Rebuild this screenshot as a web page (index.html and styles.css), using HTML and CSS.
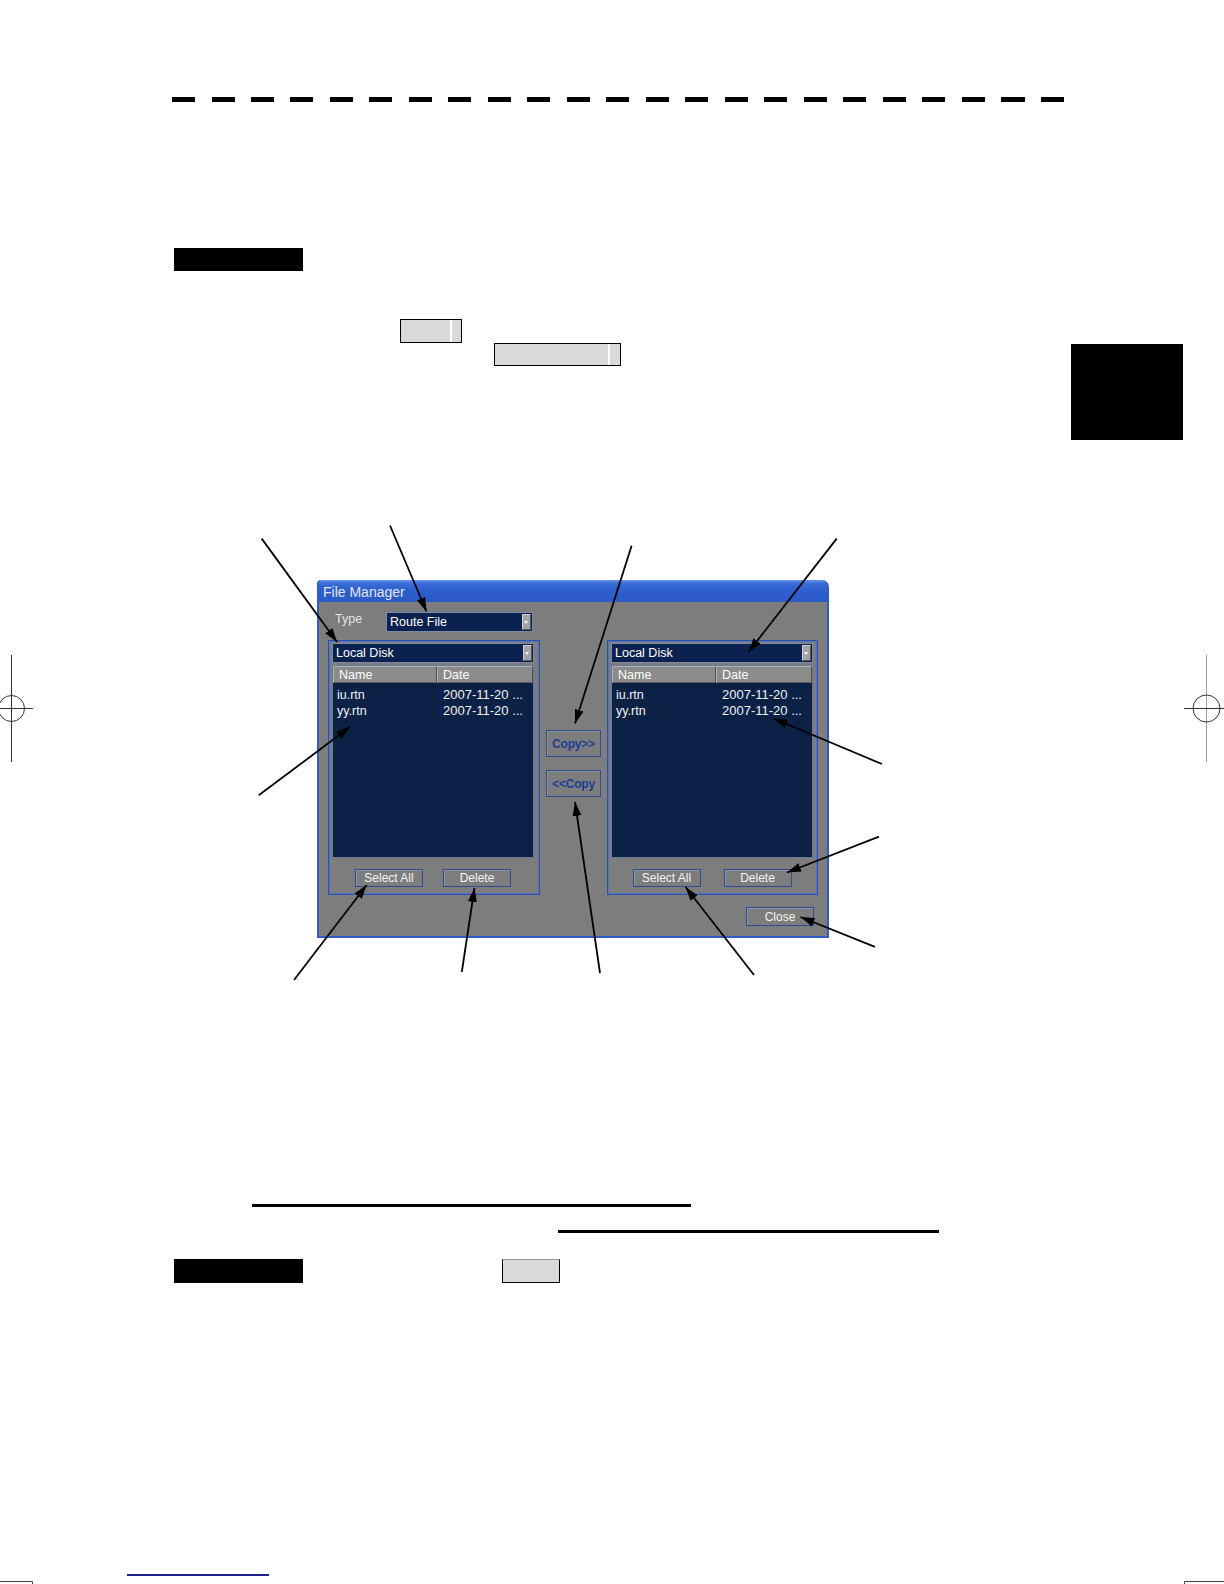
FILE: index.html
```html
<!DOCTYPE html>
<html lang="en">
<head>
<meta charset="utf-8">
<title>File Manager</title>
<link rel="stylesheet" href="styles.css">
</head>
<body>
<div class="page">
  <div class="rule"></div>

  <div class="sec1">
    <div class="sec1-left">
      <div class="blk-label"></div>
      <div class="key key-a"></div>
      <div class="key key-b"></div>
    </div>
    <div class="tab"></div>
  </div>

  <div class="figure">
    <div class="dialog">
      <div class="titlebar">File Manager</div>
      <div class="dbody">
        <div class="typerow">
          <span class="typelbl">Type</span>
          <div class="combo combo-type"><span class="ctext">Route File</span><span class="dropbtn"></span></div>
        </div>
        <div class="panels">
          <div class="panel panel-l">
            <div class="combo combo-disk"><span class="ctext">Local Disk</span><span class="dropbtn"></span></div>
            <div class="list">
              <div class="lhead"><span class="c-name">Name</span><span class="c-date">Date</span></div>
              <div class="lrow first"><span class="c-name">iu.rtn</span><span class="c-date">2007-11-20 ...</span></div>
              <div class="lrow"><span class="c-name">yy.rtn</span><span class="c-date">2007-11-20 ...</span></div>
            </div>
            <div class="pbtns"><div class="btn">Select All</div><div class="btn">Delete</div></div>
          </div>
          <div class="mid">
            <div class="cbtn">Copy&gt;&gt;</div>
            <div class="cbtn">&lt;&lt;Copy</div>
          </div>
          <div class="panel panel-r">
            <div class="combo combo-disk"><span class="ctext">Local Disk</span><span class="dropbtn"></span></div>
            <div class="list">
              <div class="lhead"><span class="c-name">Name</span><span class="c-date">Date</span></div>
              <div class="lrow first"><span class="c-name">iu.rtn</span><span class="c-date">2007-11-20 ...</span></div>
              <div class="lrow"><span class="c-name">yy.rtn</span><span class="c-date">2007-11-20 ...</span></div>
            </div>
            <div class="pbtns pbtns-r"><div class="btn">Select All</div><div class="btn">Delete</div></div>
          </div>
        </div>
        <div class="closerow"><div class="btn">Close</div></div>
      </div>
    </div>

    <svg class="arrows" viewBox="0 520 1224 470" width="1224" height="470">
      <defs>
        <marker id="ah" markerUnits="userSpaceOnUse" markerWidth="14" markerHeight="10" refX="14" refY="5" orient="auto">
          <path d="M0,0.5 L14,5 L0,9.5 z" fill="#000"/>
        </marker>
      </defs>
      <g stroke="#000" stroke-width="1.8" fill="none" marker-end="url(#ah)">
        <line x1="261.7" y1="538.6" x2="337" y2="642"/>
        <line x1="390" y1="525.5" x2="426.5" y2="611.5"/>
        <line x1="631.6" y1="545.7" x2="575" y2="723.5"/>
        <line x1="836.7" y1="538.6" x2="748.5" y2="652"/>
        <line x1="258.7" y1="795.3" x2="350" y2="727"/>
        <line x1="882" y1="764" x2="773.5" y2="718.5"/>
        <line x1="879" y1="836.7" x2="787" y2="872.5"/>
        <line x1="875" y1="946.8" x2="800.5" y2="917"/>
        <line x1="294" y1="980" x2="366.7" y2="885"/>
        <line x1="461.8" y1="972" x2="474.5" y2="888"/>
        <line x1="600" y1="973" x2="575" y2="802"/>
        <line x1="754" y1="975" x2="685.5" y2="887"/>
      </g>
    </svg>
  </div>

  <div class="uline uline-1"></div>
  <div class="uline uline-2"></div>

  <div class="brow">
    <div class="blk-label blk-b"></div>
    <div class="key key-c"></div>
  </div>

  <div class="footer-link"></div>

  <svg class="marks" viewBox="0 0 1224 1584" width="1224" height="1584">
    <g fill="none" stroke="#333" stroke-width="1">
      <line x1="11.5" y1="655" x2="11.5" y2="762"/>
      <line x1="0" y1="708.5" x2="33" y2="708.5"/>
      <circle cx="11.5" cy="708.5" r="13"/>
      <line x1="1206.5" y1="655" x2="1206.5" y2="762" stroke="#9a9a9a"/>
      <line x1="1184" y1="708.5" x2="1224" y2="708.5"/>
      <circle cx="1206.5" cy="708.5" r="13.5"/>
      <polyline points="0,1581.5 32.5,1581.5 32.5,1584" stroke="#444"/>
      <polyline points="1224,1581.5 1184.5,1581.5 1184.5,1584" stroke="#444"/>
    </g>
  </svg>
</div>
</body>
</html>
```

FILE: styles.css
```css
html, body {
  margin: 0;
  padding: 0;
  background: #fff;
}

.page {
  position: relative;
  width: 1224px;
  height: 1584px;
  overflow: hidden;
  display: flow-root;
  box-sizing: border-box;
  padding-top: 97px;
  font-family: "Liberation Sans", Arial, sans-serif;
}

/* dashed rule */
.rule {
  width: 892px;
  height: 5px;
  margin-left: 172px;
  background: repeating-linear-gradient(90deg, #000 0 23px, transparent 23px 39.5px);
}

/* first section */
.sec1 {
  display: flex;
  align-items: flex-start;
  margin-top: 146px;
}

.sec1-left {
  flex: none;
  width: 897px;
  margin-left: 174px;
}

.blk-label {
  width: 129px;
  height: 23px;
  background: #000;
}

.key {
  box-sizing: border-box;
  border: 1.5px solid #000;
  background: #d9d9d9;
}

.key-a {
  width: 62px;
  height: 24px;
  margin-top: 48px;
  margin-left: 226px;
  background: linear-gradient(90deg, #d9d9d9 0 49.5px, #fff 49.5px 51.5px, #d9d9d9 51.5px);
}

.key-b {
  width: 127px;
  height: 23px;
  margin-left: 320px;
  background: linear-gradient(90deg, #d9d9d9 0 113.5px, #fff 113.5px 115.5px, #d9d9d9 115.5px);
}

.tab {
  flex: none;
  width: 112px;
  height: 96px;
  margin-top: 96px;
  background: #000;
}

/* figure */
.figure {
  position: relative;
  box-sizing: border-box;
  height: 470px;
  margin-top: 80px;
  padding-top: 60px;
}

.arrows {
  position: absolute;
  top: 0;
  left: 0;
  pointer-events: none;
}

.dialog {
  width: 512px;
  height: 358px;
  margin-left: 317px;
  box-sizing: border-box;
  border: 2px solid #2f5cc6;
  border-top: 0;
  border-radius: 4px 7px 0 0;
  background: #7d7d7d;
  font-family: "Liberation Sans", Arial, sans-serif;
  font-size: 12.5px;
  overflow: hidden;
}

.titlebar {
  height: 22px;
  margin: 0 -2px;
  padding-left: 6px;
  line-height: 24px;
  font-size: 14px;
  color: #e4e6ec;
  background: linear-gradient(180deg, #6a95ea 0, #3c6fd9 3px, #2e61d0 9px, #2b5bca 16px, #2d5cc8 22px);
  border-radius: 4px 7px 0 0;
}

.dbody {
  padding: 10px 9px 10px 9px;
}

.typerow {
  display: flex;
  align-items: center;
  height: 20px;
}

.typelbl {
  width: 51px;
  margin-left: 7px;
  color: #e6e6e6;
  font-size: 12.5px;
  position: relative;
  top: -3px;
}

.combo {
  display: flex;
  align-items: stretch;
  box-sizing: border-box;
  height: 20px;
  padding: 1px;
  border: 1px solid #7d8aa6;
  background: #0b2250;
  color: #fff;
}

.combo-type {
  width: 147px;
}

.ctext {
  flex: 1;
  padding-left: 2px;
  line-height: 17px;
  white-space: nowrap;
}

.dropbtn {
  position: relative;
  flex: none;
  width: 9px;
  box-sizing: border-box;
  background: #a3a3a3;
  border-top: 1px solid #d0d0d0;
  border-left: 1px solid #d0d0d0;
  border-right: 1px solid #555;
  border-bottom: 1px solid #555;
}

.dropbtn::after {
  content: "";
  position: absolute;
  left: 1px;
  top: 6px;
  border-left: 2.5px solid transparent;
  border-right: 2.5px solid transparent;
  border-top: 3px solid #fff;
}

.panels {
  display: flex;
  gap: 6px;
  margin-top: 8px;
}

.panel {
  display: flex;
  flex-direction: column;
  box-sizing: border-box;
  height: 255px;
  padding: 2px 5px 0 3px;
  border: 1px solid #2a50b2;
  box-shadow: inset 0 0 0 1px #5873b4;
}

.panel-l {
  width: 212px;
}

.panel-r {
  width: 211px;
  padding-right: 4px;
}

.list {
  box-sizing: border-box;
  height: 193px;
  margin-top: 2px;
  border: 1px solid #6478a0;
  background: #0b2246;
  color: #f2f2f2;
}

.lhead {
  display: flex;
  height: 17px;
}

.lhead span {
  box-sizing: border-box;
  height: 17px;
  line-height: 16px;
  padding-left: 5px;
  background: #8b8b8b;
  color: #fff;
  border-top: 1px solid #b4b4b4;
  border-left: 1px solid #b4b4b4;
  border-right: 1px solid #4f4f4f;
  border-bottom: 1px solid #5a5a5a;
}

.lhead .c-name {
  width: 104px;
}

.lhead .c-date {
  flex: 1;
}

.lrow {
  display: flex;
  height: 16px;
  line-height: 16px;
  white-space: nowrap;
}

.lrow.first {
  margin-top: 4px;
}

.lrow .c-name {
  width: 104px;
  padding-left: 4px;
  box-sizing: border-box;
}

.lrow .c-date {
  padding-left: 6px;
  font-size: 13px;
}

.pbtns {
  display: flex;
  justify-content: center;
  gap: 20px;
  margin-top: 11px;
}

.pbtns-r {
  gap: 23px;
}

.btn {
  box-sizing: border-box;
  width: 68px;
  height: 18px;
  border: 1px solid #2d4c93;
  box-shadow: inset 1px 1px 0 #8d94a4;
  color: #f4f4f4;
  font-size: 12px;
  line-height: 17px;
  text-align: center;
}

.mid {
  display: flex;
  flex-direction: column;
  gap: 13px;
  width: 55px;
  padding-top: 90px;
}

.cbtn {
  box-sizing: border-box;
  height: 27px;
  border: 1px solid #2d4c93;
  box-shadow: inset 1px 1px 0 #8d94a4;
  color: #1d3d93;
  font-weight: bold;
  font-size: 12px;
  line-height: 26px;
  text-align: center;
  letter-spacing: -0.2px;
}

.closerow {
  display: flex;
  justify-content: flex-end;
  margin-top: 12px;
  padding-right: 4px;
}

.closerow .btn {
  height: 19px;
  line-height: 18px;
}

/* lower part */
.uline {
  height: 3px;
  background: #000;
}

.uline-1 {
  width: 439px;
  margin-top: 214px;
  margin-left: 252px;
}

.uline-2 {
  width: 381px;
  margin-top: 23px;
  margin-left: 558px;
}

.brow {
  display: flex;
  margin-top: 26px;
  margin-left: 174px;
}

.blk-b {
  height: 24px;
}

.key-c {
  width: 58px;
  height: 24px;
  margin-left: 199px;
  border-width: 1px;
  border-top-color: #9a9a9a;
}

.footer-link {
  width: 142px;
  height: 2px;
  margin-top: 291px;
  margin-left: 127px;
  background: #20208a;
}

.marks {
  position: absolute;
  top: 0;
  left: 0;
  pointer-events: none;
}
```
